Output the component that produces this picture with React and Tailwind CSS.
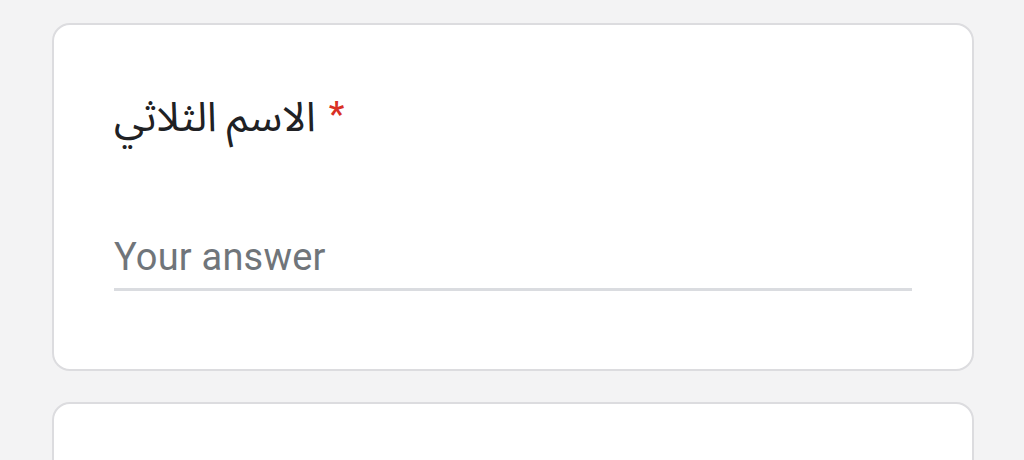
export default function App() {
    return (
        <div className="bg-[#f3f3f4] pt-[23px] pl-[52px] pr-[50px] overflow-hidden h-[460px]" style={{ fontFamily: 'Roboto, "Noto Sans Arabic", "DejaVu Sans", sans-serif' }}>
            <div className="bg-white border-2 border-[#dcdcdf] rounded-[18px] h-[348px] px-[60px] pt-[64px]">
                <div className="flex items-start text-[41px] leading-[56px] text-[#202124]">
                    <span dir="rtl">الاسم الثلاثي</span>
                    <span className="text-[#d93025] ml-[13px] text-[35px] font-medium leading-[48px] mt-[2px]">*</span>
                </div>
                <div className="mt-[90px] text-[38px] leading-[44px] text-[#70757a] tracking-[0.2px]">Your answer</div>
                <div className="mt-[9px] h-[3px] bg-[#dadce0]" />
            </div>
            <div className="bg-white border-2 border-[#dcdcdf] rounded-[18px] h-[100px] mt-[31px]" />
        </div>
    );
}
